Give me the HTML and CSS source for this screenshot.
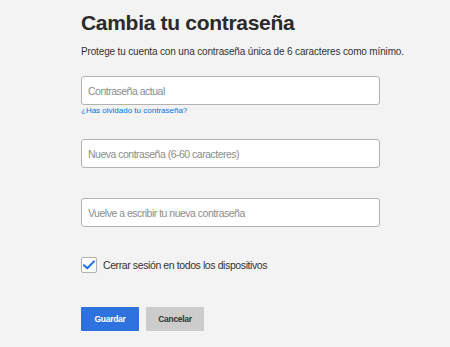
FILE: index.html
```html
<!DOCTYPE html>
<html lang="es">
<head>
    <meta charset="UTF-8">
    <meta name="viewport" content="width=device-width, initial-scale=1.0">
    <title>Cambia tu contraseña</title>
    <link rel="stylesheet" href="styles.css">
</head>
<body>
    <form class="password-form">
        <h1 class="title">Cambia tu contraseña</h1>
        <p class="subtitle">Protege tu cuenta con una contraseña única de 6 caracteres como mínimo.</p>

        <div class="field field-current">
            <input type="password" class="text-input" placeholder="Contraseña actual">
            <a href="#" class="forgot-link">¿Has olvidado tu contraseña?</a>
        </div>

        <div class="field">
            <input type="password" class="text-input" placeholder="Nueva contraseña (6-60 caracteres)">
        </div>

        <div class="field">
            <input type="password" class="text-input" placeholder="Vuelve a escribir tu nueva contraseña">
        </div>

        <label class="signout">
            <span class="checkbox">
                <svg width="12" height="10" viewBox="0 0 12 10">
                    <path d="M1 5.2 L4.3 8.3 L11 1.4" fill="none" stroke="#1f6fe5" stroke-width="2" stroke-linecap="round" stroke-linejoin="round"/>
                </svg>
            </span>
            Cerrar sesión en todos los dispositivos
        </label>

        <div class="actions">
            <button type="button" class="btn btn-save">Guardar</button>
            <button type="button" class="btn btn-cancel">Cancelar</button>
        </div>
    </form>
</body>
</html>
```

FILE: styles.css
```css
body {
    margin: 0;
    background-color: #f3f3f3;
    font-family: "Liberation Sans", Arial, sans-serif;
    color: #333;
}
.password-form {
    padding: 10px 0 0 81px;
    width: 299px;
}
.title {
    margin: 0;
    font-size: 21px;
    line-height: 25px;
    font-weight: bold;
    letter-spacing: -0.3px;
    color: #2a2a2a;
}
.subtitle {
    margin: 10px 0 0;
    font-size: 10px;
    line-height: 14px;
    letter-spacing: -0.15px;
    white-space: nowrap;
}
.field {
    margin-top: 19px;
    height: 40px;
}
.field-current {
    margin-top: 17px;
    height: 44px;
}
.text-input {
    display: block;
    box-sizing: border-box;
    width: 299px;
    height: 29px;
    padding: 0 6px;
    border: 1px solid #b3b3b3;
    border-radius: 3px;
    background-color: white;
    font-family: inherit;
    font-size: 10.5px;
    letter-spacing: -0.5px;
}
.text-input::placeholder {
    color: #8c8c8c;
}
.forgot-link {
    display: block;
    margin-top: 1px;
    font-size: 8px;
    line-height: 10px;
    color: #0071eb;
    text-decoration: none;
}
.signout {
    display: flex;
    align-items: center;
    gap: 6px;
    margin-top: 19px;
    font-size: 10.5px;
    letter-spacing: -0.4px;
    color: #333;
}
.checkbox {
    display: flex;
    align-items: center;
    justify-content: center;
    box-sizing: border-box;
    width: 16px;
    height: 16px;
    border: 1px solid #b3b3b3;
    border-radius: 2px;
    background-color: white;
}
.actions {
    display: flex;
    gap: 7px;
    margin-top: 34px;
}
.btn {
    width: 58px;
    height: 24px;
    border: none;
    border-radius: 1px;
    font-family: inherit;
    font-size: 8.5px;
    font-weight: bold;
    letter-spacing: -0.3px;
    cursor: pointer;
}
.btn-save {
    background-color: #2e72e0;
    color: white;
}
.btn-cancel {
    background-color: #cccccc;
    color: #333;
}
```
